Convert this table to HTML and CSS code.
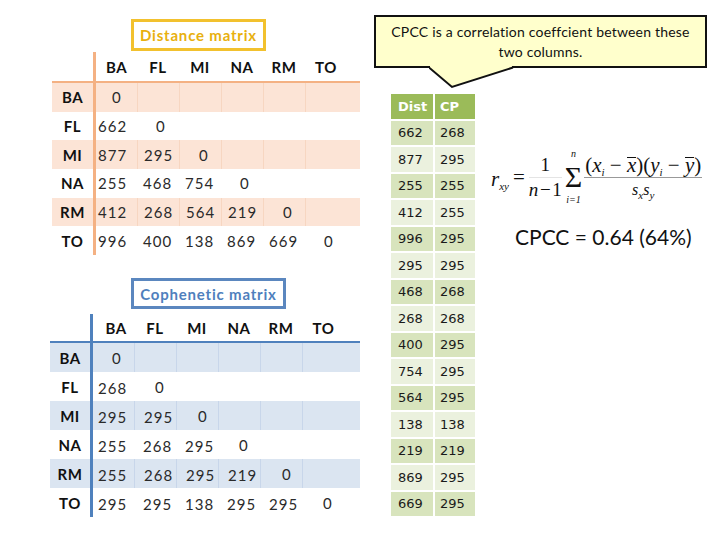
FILE: index.html
```html
<!DOCTYPE html>
<html>
<head>
<meta charset="utf-8">
<link rel="stylesheet" href="styles.css">
</head>
<body>
<div class="page">
  <section class="left">
    <div class="block dist">
      <div class="mtitle gold">Distance matrix</div>
      <div class="mx orange">
        <div class="mrow head"><span class="rh"></span><span>BA</span><span>FL</span><span>MI</span><span>NA</span><span>RM</span><span>TO</span></div>
        <div class="mrow alt"><span class="rh">BA</span><span class="z">0</span><span></span><span></span><span></span><span></span><span></span></div>
        <div class="mrow"><span class="rh">FL</span><span>662</span><span class="z">0</span><span></span><span></span><span></span><span></span></div>
        <div class="mrow alt"><span class="rh">MI</span><span>877</span><span>295</span><span class="z">0</span><span></span><span></span><span></span></div>
        <div class="mrow"><span class="rh">NA</span><span>255</span><span>468</span><span>754</span><span class="z">0</span><span></span><span></span></div>
        <div class="mrow alt"><span class="rh">RM</span><span>412</span><span>268</span><span>564</span><span>219</span><span class="z">0</span><span></span></div>
        <div class="mrow"><span class="rh">TO</span><span>996</span><span>400</span><span>138</span><span>869</span><span>669</span><span class="z">0</span></div>
      </div>
    </div>
    <div class="block coph">
      <div class="mtitle blue">Cophenetic matrix</div>
      <div class="mx bluex">
        <div class="mrow head"><span class="rh"></span><span>BA</span><span>FL</span><span>MI</span><span>NA</span><span>RM</span><span>TO</span></div>
        <div class="mrow alt"><span class="rh">BA</span><span class="z">0</span><span></span><span></span><span></span><span></span><span></span></div>
        <div class="mrow"><span class="rh">FL</span><span>268</span><span class="z">0</span><span></span><span></span><span></span><span></span></div>
        <div class="mrow alt"><span class="rh">MI</span><span>295</span><span>295</span><span class="z">0</span><span></span><span></span><span></span></div>
        <div class="mrow"><span class="rh">NA</span><span>255</span><span>268</span><span>295</span><span class="z">0</span><span></span><span></span></div>
        <div class="mrow alt"><span class="rh">RM</span><span>255</span><span>268</span><span>295</span><span>219</span><span class="z">0</span><span></span></div>
        <div class="mrow"><span class="rh">TO</span><span>295</span><span>295</span><span>138</span><span>295</span><span>295</span><span class="z">0</span></div>
      </div>
    </div>
  </section>
  <section class="right">
    <div class="callout">
      <p>CPCC is a correlation coeffcient between these<br>two columns.</p>
      <svg class="tail" width="86" height="24" viewBox="0 0 86 24">
        <polygon points="1,0 1,2 23,21 83,2 83,0" fill="#ffffcc"/>
        <polyline points="0,1.5 23,21 84,1.5" fill="none" stroke="#111" stroke-width="2"/>
      </svg>
    </div>
    <div class="lower">
      <div class="gtable">
        <div class="gh">Dist</div><div class="gh">CP</div>
        <div class="d">662</div><div class="d">268</div>
        <div class="l">877</div><div class="l">295</div>
        <div class="d">255</div><div class="d">255</div>
        <div class="l">412</div><div class="l">255</div>
        <div class="d">996</div><div class="d">295</div>
        <div class="l">295</div><div class="l">295</div>
        <div class="d">468</div><div class="d">268</div>
        <div class="l">268</div><div class="l">268</div>
        <div class="d">400</div><div class="d">295</div>
        <div class="l">754</div><div class="l">295</div>
        <div class="d">564</div><div class="d">295</div>
        <div class="l">138</div><div class="l">138</div>
        <div class="d">219</div><div class="d">219</div>
        <div class="l">869</div><div class="l">295</div>
        <div class="d">669</div><div class="d">295</div>
      </div>
      <div class="side">
        <div class="formula">
          <span class="r">r<sub>xy</sub></span>
          <span class="eq">=</span>
          <span class="frac small"><span class="num">1</span><span class="den"><i>n</i>&#8202;−&#8202;1</span></span>
          <span class="sum"><span class="lim">n</span><span class="sig">Σ</span><span class="lim">i=1</span></span>
          <span class="frac big"><span class="num">(<i>x</i><sub>i</sub> − <span class="ov">x</span>)(<i>y</i><sub>i</sub> − <span class="ov">y</span>)</span><span class="den"><i>s</i><sub>x</sub><i>s</i><sub>y</sub></span></span>
        </div>
        <div class="cpcc">CPCC = 0.64 (64%)</div>
      </div>
    </div>
  </section>
</div>
</body>
</html>
```
FILE: styles.css
```css
html, body {
  margin: 0;
  padding: 0;
  background: #ffffff;
}

.page {
  width: 720px;
  height: 540px;
  display: flex;
  overflow: hidden;
  font-family: Lato, "Liberation Sans", sans-serif;
  color: #2a2a2a;
}

.left {
  width: 360px;
  display: flex;
  flex-direction: column;
}

.dist {
  padding-top: 19px;
}

.coph {
  padding-top: 23px;
}

.mtitle {
  box-sizing: border-box;
  height: 32px;
  margin-left: 131px;
  display: flex;
  align-items: center;
  justify-content: center;
  font-size: 15px;
  letter-spacing: 0.8px;
  font-weight: 700;
}

.gold {
  width: 135px;
  border: 3px solid #f2c12e;
  color: #e8b00f;
}

.blue {
  width: 155px;
  height: 31px;
  border: 3px solid #5b87bf;
  color: #4f7fbd;
}

.mx {
  margin-left: 52px;
  margin-top: 1px;
  font-size: 15px;
  letter-spacing: 1px;
}

.bluex {
  margin-left: 50px;
  margin-top: 5px;
}

.mrow {
  display: grid;
  grid-template-columns: 44px 41px 42px 42px 42px 42px 42px;
  height: 28.7px;
  box-sizing: border-box;
}

.bluex .mrow {
  grid-template-columns: 43px 41px 42px 42px 42px 42px 43px;
  height: 29px;
}

.mrow > span {
  display: flex;
  align-items: center;
  box-sizing: border-box;
  padding-left: 6px;
  height: 100%;
}

.mrow > span:nth-child(2) {
  padding-left: 2px;
}

.bluex .mrow > span {
  padding-left: 9px;
  padding-top: 3px;
}

.bluex .mrow > span:nth-child(2) {
  padding-left: 5px;
}

.mrow > span.z {
  padding-left: 19px;
}

.mrow > span:nth-child(2).z {
  padding-left: 16px;
}

.bluex .mrow > span.z {
  padding-left: 21px;
  padding-top: 0;
}

.bluex .mrow > span:nth-child(2).z {
  padding-left: 19px;
}

.mrow > span.rh {
  justify-content: center;
  padding: 0;
  font-weight: 700;
  color: #111;
  letter-spacing: 0.5px;
}

.orange .rh {
  border-right: 3px solid #f4b183;
}

.bluex .rh {
  border-right: 3px solid #4f81bd;
}

.mrow.head {
  height: 31px;
  font-weight: 700;
  color: #111;
}

.mrow.head > span {
  justify-content: center;
  padding: 0;
  letter-spacing: 0.5px;
}

.orange .head {
  border-bottom: 2px solid #f4b183;
}

.bluex .head {
  height: 29px;
  border-bottom: 2px solid #4f81bd;
}

.orange .alt {
  background: #fce4d6;
}

.orange .alt > span + span + span {
  border-left: 1px solid #f7d6c1;
}

.bluex .alt {
  background: #dbe5f1;
}

.bluex .alt > span + span + span {
  border-left: 1px solid #c8d6ea;
}

/* right side */
.right {
  flex: 1;
  display: flex;
  flex-direction: column;
}

.callout {
  position: relative;
  box-sizing: border-box;
  margin: 15px 0 0 14px;
  width: 333px;
  height: 53px;
  border: 2px solid #111;
  background: #ffffcc;
  display: flex;
  align-items: center;
  justify-content: center;
  text-align: center;
}

.callout p {
  margin: 0;
  font-size: 14px;
  line-height: 20px;
  color: #111;
  letter-spacing: 0.2px;
}

.tail {
  position: absolute;
  left: 53px;
  top: 49px;
}

.lower {
  display: flex;
  margin-top: 26px;
}

.gtable {
  margin-left: 31px;
  display: grid;
  grid-template-columns: 42px 40px;
  grid-auto-rows: 24.5px;
  gap: 2px;
  font-family: "DejaVu Sans", sans-serif;
  font-size: 13px;
  color: #1a1a1a;
  align-self: flex-start;
}

.gtable > div {
  display: flex;
  align-items: center;
  padding-left: 7px;
}

.gtable > div:nth-child(even) {
  padding-left: 5px;
}

.gh {
  background: #9bbb59;
  color: #fff;
  font-weight: 700;
}

.d {
  background: #d8e4bd;
}

.l {
  background: #ebf1de;
}

.side {
  margin-left: 16px;
  display: flex;
  flex-direction: column;
}

.formula {
  margin-top: 53px;
  height: 60px;
  display: flex;
  align-items: center;
  font-family: "Liberation Serif", serif;
  font-size: 19px;
  color: #111;
  white-space: nowrap;
}

.formula sub {
  font-size: 11px;
  font-style: italic;
  vertical-align: -4px;
}

.r {
  font-style: italic;
  font-size: 21px;
  margin-top: 4px;
}

.eq {
  margin: 0 4px 0 4px;
  font-size: 21px;
}

.frac {
  display: inline-flex;
  flex-direction: column;
  align-items: center;
}

.frac .num,
.frac .den {
  height: 24px;
  line-height: 24px;
}

.frac .num {
  border-bottom: 1px solid #999;
}

.frac.small .num {
  width: 100%;
  text-align: center;
  font-size: 19px;
  border-bottom-color: #e4e4e4;
}

.frac.small .den {
  font-size: 19px;
}

.sum {
  display: inline-flex;
  flex-direction: column;
  align-items: center;
  margin: 0 2px 0 3px;
  line-height: 1;
}

.sum .lim {
  font-size: 10px;
  font-style: italic;
  line-height: 12px;
}

.sum .sig {
  font-size: 30px;
  line-height: 34px;
}

.frac.big .num {
  font-size: 21px;
  padding: 0 1px;
}

.frac.big .den {
  font-size: 16px;
}

.ov {
  display: inline-block;
  font-style: italic;
  line-height: 14px;
  border-top: 1px solid #111;
}

.cpcc {
  margin-top: 17px;
  margin-left: 24px;
  font-size: 21px;
  color: #111;
  white-space: nowrap;
}
```
